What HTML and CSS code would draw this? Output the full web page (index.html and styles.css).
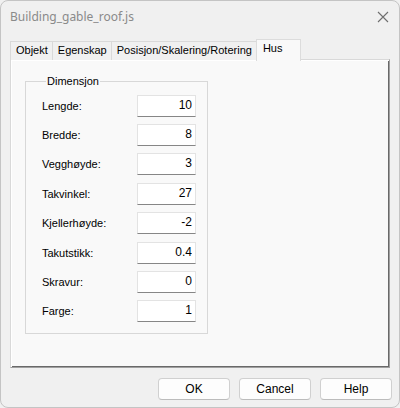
FILE: index.html
```html
<!DOCTYPE html>
<html lang="no">
<head>
    <meta charset="UTF-8">
    <title>Building_gable_roof.js</title>
    <link rel="stylesheet" href="styles.css">
</head>
<body>
    <div class="window">
        <div class="titlebar">
            <span class="title">Building_gable_roof.js</span>
            <svg class="close" width="12" height="12" viewBox="0 0 12 12">
                <path d="M1 1 L11 11 M11 1 L1 11" stroke="#6e6e6e" stroke-width="1.1" fill="none"/>
            </svg>
        </div>
        <div class="tabs">
            <div class="tab">Objekt</div>
            <div class="tab">Egenskap</div>
            <div class="tab">Posisjon/Skalering/Rotering</div>
            <div class="tab active">Hus</div>
        </div>
        <div class="panel">
            <fieldset class="group">
                <legend>Dimensjon</legend>
                <div class="row"><label>Lengde:</label><input type="text" value="10"></div>
                <div class="row"><label>Bredde:</label><input type="text" value="8"></div>
                <div class="row"><label>Vegghøyde:</label><input type="text" value="3"></div>
                <div class="row"><label>Takvinkel:</label><input type="text" value="27"></div>
                <div class="row"><label>Kjellerhøyde:</label><input type="text" value="-2"></div>
                <div class="row"><label>Takutstikk:</label><input type="text" value="0.4"></div>
                <div class="row"><label>Skravur:</label><input type="text" value="0"></div>
                <div class="row"><label>Farge:</label><input type="text" value="1"></div>
            </fieldset>
        </div>
        <div class="buttons">
            <button>OK</button>
            <button>Cancel</button>
            <button>Help</button>
        </div>
    </div>
</body>
</html>
```

FILE: styles.css
```css
html, body {
    margin: 0;
    background: #f0f0f0;
}
body {
    font-family: "Liberation Sans", Arial, sans-serif;
    font-size: 11px;
    color: #000;
}
.window {
    box-sizing: border-box;
    width: 400px;
    height: 408px;
    border: 1px solid #c4c4c4;
    border-radius: 8px;
    background: #f0f0f0;
    display: flex;
    flex-direction: column;
}
.titlebar {
    height: 30px;
    display: flex;
    align-items: center;
    justify-content: space-between;
    padding: 0 10px 0 9px;
}
.title {
    font-family: "Noto Sans", "Open Sans", sans-serif;
    font-size: 12px;
    color: #8a8a8a;
}
.close {
    margin-top: 1px;
}
.tabs {
    display: flex;
    align-items: flex-end;
    height: 21px;
    margin: 7px 0 0 9px;
    position: relative;
    z-index: 1;
}
.tab {
    box-sizing: border-box;
    height: 19px;
    line-height: 17px;
    padding: 0 4px 0 5px;
    background: #f0f0f0;
    border: 1px solid #d9d9d9;
    border-bottom: none;
    margin-right: -1px;
    margin-bottom: -1px;
}
.tab.active {
    width: 45px;
    height: 22px;
    line-height: 17px;
    padding: 0 0 0 6px;
    background: #f9f9f9;
    border-color: #dcdcdc;
    margin-bottom: -2px;
}
.panel {
    box-sizing: border-box;
    height: 309px;
    margin: 0 9px;
    padding: 15px 0 0 14px;
    background: #f9f9f9;
    border: 1px solid;
    border-color: #d9d9d9 #a0a0a0 #a0a0a0 #d9d9d9;
    box-shadow: inset 1px 1px #ffffff, inset -1px -1px #696969;
}
.group {
    box-sizing: border-box;
    width: 183px;
    height: 259px;
    margin: 0;
    padding: 3px 10px 0 16px;
    border: 1px solid #d8d8d8;
}
.group legend {
    padding: 0 1px;
    margin-left: 4px;
    line-height: 13px;
}
.row {
    display: flex;
    align-items: center;
    height: 29.4px;
}
.row label {
    width: 95px;
}
.row input {
    box-sizing: border-box;
    width: 59px;
    height: 22px;
    margin: 0;
    padding: 0 3px 2px 0;
    text-align: right;
    font-family: inherit;
    font-size: 12px;
    background: #fff;
    border: 1px solid #e3e3e3;
    border-bottom-color: #868686;
    outline: none;
}
.buttons {
    display: flex;
    justify-content: flex-end;
    gap: 9px;
    margin: 10px 7px 0 0;
}
.buttons button {
    box-sizing: border-box;
    width: 72px;
    height: 22px;
    font-family: inherit;
    font-size: 12px;
    color: #000;
    background: #fdfdfd;
    border: 1px solid #d0d0d0;
    border-bottom-color: #bcbcbc;
    border-radius: 4px;
    padding: 0;
}
```
